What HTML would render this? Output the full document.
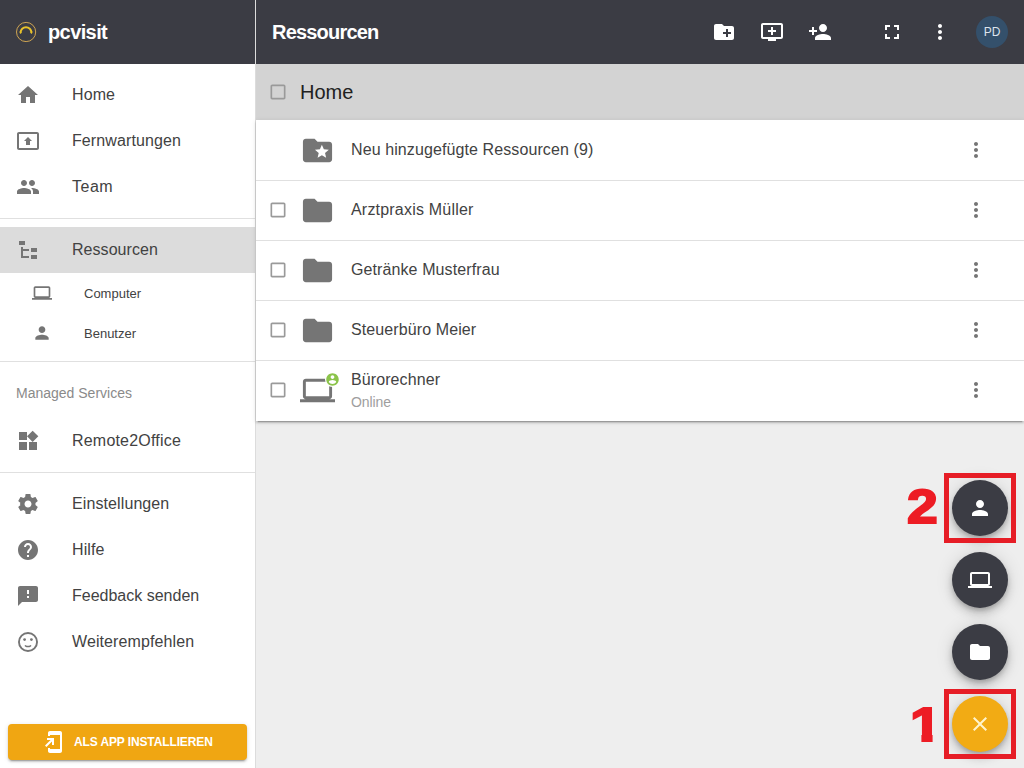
<!DOCTYPE html>
<html lang="de">
<head>
<meta charset="utf-8">
<title>pcvisit - Ressourcen</title>
<style>
*{box-sizing:border-box;margin:0;padding:0}
html,body{width:1024px;height:768px;overflow:hidden}
body{font-family:"Liberation Sans",sans-serif;background:#eeeeee;color:#424242;position:relative}
svg{display:block}
.abs{position:absolute}
/* sidebar */
#side{position:absolute;left:0;top:0;width:256px;height:768px;background:#fff;border-right:1px solid #dcdcdc}
#sidehead{position:absolute;left:0;top:0;width:255px;height:64px;background:#3b3c44}
#brand{position:absolute;left:48px;top:20px;font-size:20px;line-height:24px;font-weight:bold;color:#fff;letter-spacing:-0.6px}
.nav{position:absolute;left:0;width:255px;height:46px}
.nav svg{position:absolute;left:16px;top:11px;width:24px;height:24px;fill:#757575}
.nav span{position:absolute;left:72px;top:13px;font-size:16px;line-height:20px;color:#424242;white-space:nowrap;letter-spacing:0.1px}
.nav.sel{background:#dcdcdc}
.sub{position:absolute;left:0;width:255px;height:40px}
.sub svg{position:absolute;left:32px;top:10px;width:20px;height:20px;fill:#757575}
.sub span{position:absolute;left:84px;top:13px;font-size:13px;line-height:16px;color:#424242;white-space:nowrap}
.hr{position:absolute;left:0;width:255px;height:1px;background:#e0e0e0}
#ms{position:absolute;left:16px;top:385px;font-size:14px;line-height:16px;color:#8a8a8a;white-space:nowrap}
#inst{position:absolute;left:8px;top:724px;width:239px;height:36px;background:#f0a612;border-radius:4px;box-shadow:0 3px 1px -2px rgba(0,0,0,.2),0 2px 2px 0 rgba(0,0,0,.14),0 1px 5px 0 rgba(0,0,0,.12)}
#inst svg{position:absolute;left:34px;top:6px;width:24px;height:24px;fill:#fff}
#inst span{position:absolute;left:66px;top:10px;font-size:12px;line-height:16px;font-weight:bold;color:#fff;white-space:nowrap;letter-spacing:-0.12px}
/* main */
#top{position:absolute;left:256px;top:0;width:768px;height:64px;background:#3b3c44}
#title{position:absolute;left:16px;top:20px;font-size:20px;line-height:24px;font-weight:bold;color:#fff;letter-spacing:-0.8px}
#top svg{position:absolute;top:20px;width:24px;height:24px;fill:#fff}
#avatar{position:absolute;left:720px;top:16px;width:32px;height:32px;border-radius:50%;background:#34506b;color:#dde4ec;font-size:12px;line-height:32px;text-align:center}
#crumb{position:absolute;left:256px;top:64px;width:768px;height:56px;background:#d3d3d3}
#crumb span{position:absolute;left:44px;top:16px;font-size:20px;line-height:24px;color:#212121}
.cb{position:absolute;left:12px;width:20px;height:20px;fill:#9a9a9a}
#list{position:absolute;left:256px;top:120px;width:768px;height:301px;background:#fff;box-shadow:0 3px 1px -2px rgba(0,0,0,.2),0 2px 2px 0 rgba(0,0,0,.14),0 1px 5px 0 rgba(0,0,0,.12)}
.row{position:absolute;left:0;width:768px;height:60px;box-shadow:inset 0 1px 0 #e0e0e0}
.row:first-child{box-shadow:none}
.row .ic{position:absolute;left:44px;top:13px;width:35px;height:35px;fill:#757575}
.row .t{position:absolute;left:95px;top:20px;font-size:16px;line-height:20px;color:#424242;white-space:nowrap;letter-spacing:0.1px}
.row .mv{position:absolute;left:708px;top:18px;width:24px;height:24px;fill:#757575}
/* fabs */
.fab{position:absolute;left:952px;width:56px;height:56px;border-radius:50%;background:#3b3c44;box-shadow:0 3px 5px -1px rgba(0,0,0,.2),0 6px 10px 0 rgba(0,0,0,.14),0 1px 18px 0 rgba(0,0,0,.12)}
.fab svg{position:absolute;left:16px;top:16px;width:24px;height:24px;fill:#fff}
.mark{position:absolute;border:5px solid #e61d26}
.num{position:absolute;font-family:"Liberation Sans",sans-serif;font-weight:bold;color:#ed1c24;-webkit-text-stroke:2px #ed1c24;white-space:nowrap;transform-origin:0 0;transform:scaleX(1.17)}
</style>
</head>
<body>
<div id="side">
  <div id="sidehead">
    <svg class="abs" style="left:15px;top:21px" width="22" height="22" viewBox="0 0 22 22"><circle cx="11.100" cy="11" r="9.600" fill="none" stroke="#cfa552" stroke-width="1"/><path d="M5.6 11.6a5.4 5.4 0 0 1 10.8 0" fill="none" stroke="#e8c22a" stroke-width="1.9" stroke-linecap="round"/><path d="M4.3 10.6l2.600.2-1.300 2.200zM17.700 10.600l-2.600.2 1.300 2.200z" fill="#e8c22a"/></svg>
    <div id="brand">pcvisit</div>
  </div>
  <div class="nav" style="top:72px"><svg viewBox="0 0 24 24"><path d="M10 20v-6h4v6h5v-8h3L12 3 2 12h3v8z"/></svg><span>Home</span></div>
  <div class="nav" style="top:118px"><svg viewBox="0 0 24 24"><path d="M21 3H3c-1.110 0-2 .89-2 2v14c0 1.110.89 2 2 2h18c1.110 0 2-.89 2-2V5c0-1.110-.89-2-2-2zm0 16.020H3V4.980h18v14.040zM10 12H8l4-4 4 4h-2v4h-4v-4z"/></svg><span>Fernwartungen</span></div>
  <div class="nav" style="top:164px"><svg viewBox="0 0 24 24"><path d="M16 11c1.660 0 2.990-1.340 2.990-3S17.660 5 16 5c-1.660 0-3 1.340-3 3s1.340 3 3 3zm-8 0c1.660 0 2.990-1.340 2.990-3S9.660 5 8 5C6.340 5 5 6.340 5 8s1.340 3 3 3zm0 2c-2.330 0-7 1.170-7 3.500V19h14v-2.500c0-2.330-4.670-3.500-7-3.500zm8 0c-.29 0-.62.020-.97.050 1.160.84 1.970 1.970 1.970 3.450V19h6v-2.500c0-2.330-4.670-3.500-7-3.500z"/></svg><span style="letter-spacing:0.5px">Team</span></div>
  <div class="hr" style="top:218px"></div>
  <div class="nav sel" style="top:227px"><svg viewBox="0 0 24 24"><path d="M3 3h6v4H3V3m12 7h6v4h-6v-4m0 7h6v4h-6v-4m-2-4H7v5h6v2H5V9h2v2h6v2z"/></svg><span style="letter-spacing:0.05px">Ressourcen</span></div>
  <div class="sub" style="top:273px"><svg viewBox="0 0 24 24"><path d="M20 18c1.100 0 1.990-.9 1.990-2L22 6c0-1.100-.9-2-2-2H4c-1.100 0-2 .9-2 2v10c0 1.100.9 2 2 2H0v2h24v-2h-4zM4 6h16v10H4V6z"/></svg><span>Computer</span></div>
  <div class="sub" style="top:313px"><svg viewBox="0 0 24 24"><path d="M12 12c2.210 0 4-1.790 4-4s-1.790-4-4-4-4 1.790-4 4 1.790 4 4 4zm0 2c-2.670 0-8 1.340-8 4v2h16v-2c0-2.660-5.330-4-8-4z"/></svg><span>Benutzer</span></div>
  <div class="hr" style="top:361px"></div>
  <div id="ms">Managed Services</div>
  <div class="nav" style="top:418px"><svg viewBox="0 0 24 24"><path d="M13 13v8h8v-8h-8zM3 21h8v-8H3v8zM3 3v8h8V3H3zm13.660-1.310L11 7.340 16.660 13l5.660-5.660-5.660-5.650z"/></svg><span style="letter-spacing:0.2px">Remote2Office</span></div>
  <div class="hr" style="top:472px"></div>
  <div class="nav" style="top:481px"><svg viewBox="0 0 24 24"><path d="M19.430 12.980c.04-.32.070-.64.070-.98s-.03-.66-.07-.98l2.110-1.650c.19-.15.240-.42.120-.64l-2-3.460c-.12-.22-.39-.3-.61-.22l-2.490 1c-.52-.4-1.080-.73-1.690-.98l-.38-2.650C14.460 2.180 14.250 2 14 2h-4c-.25 0-.46.180-.49.420l-.38 2.650c-.61.250-1.170.59-1.690.98l-2.490-1c-.23-.09-.49 0-.61.220l-2 3.460c-.13.220-.07.490.12.640l2.110 1.650c-.4.320-.7.650-.7.980s.3.660.7.980l-2.110 1.650c-.19.150-.24.420-.12.640l2 3.460c.12.220.39.300.61.220l2.490-1c.52.400 1.080.73 1.690.98l.38 2.650c.3.240.24.420.49.420h4c.25 0 .46-.18.490-.42l.38-2.650c.61-.25 1.170-.59 1.690-.98l2.490 1c.23.090.49 0 .61-.22l2-3.460c.12-.22.070-.49-.12-.64l-2.110-1.650zM12 15.500c-1.930 0-3.500-1.570-3.500-3.500s1.570-3.500 3.500-3.500 3.500 1.570 3.500 3.500-1.570 3.500-3.500 3.500z"/></svg><span>Einstellungen</span></div>
  <div class="nav" style="top:527px"><svg viewBox="0 0 24 24"><path d="M12 2C6.480 2 2 6.480 2 12s4.480 10 10 10 10-4.480 10-10S17.520 2 12 2zm1 17h-2v-2h2v2zm2.070-7.750l-.9.920C13.450 12.900 13 13.500 13 15h-2v-.5c0-1.100.45-2.100 1.170-2.830l1.240-1.260c.37-.36.590-.86.590-1.410 0-1.100-.9-2-2-2s-2 .9-2 2H8c0-2.210 1.790-4 4-4s4 1.790 4 4c0 .88-.36 1.680-.93 2.250z"/></svg><span>Hilfe</span></div>
  <div class="nav" style="top:573px"><svg viewBox="0 0 24 24"><path d="M20 2H4c-1.100 0-1.990.9-1.990 2L2 22l4-4h14c1.100 0 2-.9 2-2V4c0-1.100-.9-2-2-2zm-7 12h-2v-2h2v2zm0-4h-2V6h2v4z"/></svg><span style="letter-spacing:0">Feedback senden</span></div>
  <div class="nav" style="top:619px"><svg viewBox="0 0 24 24"><circle cx="12" cy="12" r="9.050" fill="none" stroke="#757575" stroke-width="1.900"/><circle cx="8.600" cy="9.600" r="1.400"/><circle cx="15.400" cy="9.600" r="1.400"/><path d="M9.400 15.800q2.600 1.500 5.200 0" fill="none" stroke="#757575" stroke-width="1.500" stroke-linecap="round"/></svg><span>Weiterempfehlen</span></div>
  <div id="inst"><svg viewBox="0 0 24 24"><path d="M18 1.010L8 1c-1.100 0-2 .9-2 2v3h2V5h10v14H8v-1H6v3c0 1.100.9 2 2 2h10c1.100 0 2-.9 2-2V3c0-1.100-.9-1.990-2-1.990zM10 15h2V8H5v2h3.590L3 15.590 4.410 17 10 11.410V15z"/></svg><span>ALS APP INSTALLIEREN</span></div>
</div>

<div id="top">
  <div id="title">Ressourcen</div>
  <svg style="left:456px" viewBox="0 0 24 24"><path d="M20 6h-8l-2-2H4c-1.110 0-1.990.89-1.990 2L2 18c0 1.110.89 2 2 2h16c1.110 0 2-.89 2-2V8c0-1.110-.89-2-2-2zm-1 8h-3v3h-2v-3h-3v-2h3V9h2v3h3v2z"/></svg>
  <svg style="left:504px" viewBox="0 0 24 24"><path d="M21 3H3c-1.110 0-2 .89-2 2v12c0 1.100.89 2 2 2h5v2h8v-2h5c1.100 0 1.990-.9 1.990-2L23 5c0-1.110-.9-2-2-2zm0 14H3V5h18v12zm-5-7v2h-3v3h-2v-3H8v-2h3V7h2v3h3z"/></svg>
  <svg style="left:552px" viewBox="0 0 24 24"><path d="M15 12c2.210 0 4-1.790 4-4s-1.790-4-4-4-4 1.790-4 4 1.790 4 4 4zm-9-2V7H4v3H1v2h3v3h2v-3h3v-2H6zm9 4c-2.670 0-8 1.340-8 4v2h16v-2c0-2.660-5.330-4-8-4z"/></svg>
  <svg style="left:624px" viewBox="0 0 24 24"><path d="M7 14H5v5h5v-2H7v-3zm-2-4h2V7h3V5H5v5zm12 7h-3v2h5v-5h-2v3zM14 5v2h3v3h2V5h-5z"/></svg>
  <svg style="left:672px" viewBox="0 0 24 24"><path d="M12 8c1.100 0 2-.9 2-2s-.9-2-2-2-2 .9-2 2 .9 2 2 2zm0 2c-1.100 0-2 .9-2 2s.9 2 2 2 2-.9 2-2-.9-2-2-2zm0 6c-1.100 0-2 .9-2 2s.9 2 2 2 2-.9 2-2-.9-2-2-2z"/></svg>
  <div id="avatar">PD</div>
</div>

<div id="crumb">
  <svg class="cb" style="top:18px" viewBox="0 0 24 24"><path d="M19 5v14H5V5h14m0-2H5c-1.100 0-2 .9-2 2v14c0 1.100.9 2 2 2h14c1.100 0 2-.9 2-2V5c0-1.100-.9-2-2-2z"/></svg>
  <span>Home</span>
</div>

<div id="list">
  <div class="row" style="top:0">
    <svg class="ic" viewBox="0 0 24 24"><path d="M20 6h-8l-2-2H4c-1.100 0-1.990.9-1.990 2L2 18c0 1.100.9 2 2 2h16c1.100 0 2-.9 2-2V8c0-1.100-.9-2-2-2zm-2.060 11L15 15.280 12.060 17l.78-3.330-2.590-2.240 3.410-.29L15 8l1.340 3.140 3.410.29-2.590 2.240.78 3.330z"/></svg>
    <div class="t">Neu hinzugefügte Ressourcen (9)</div>
    <svg class="mv" viewBox="0 0 24 24"><path d="M12 8c1.100 0 2-.9 2-2s-.9-2-2-2-2 .9-2 2 .9 2 2 2zm0 2c-1.100 0-2 .9-2 2s.9 2 2 2 2-.9 2-2-.9-2-2-2zm0 6c-1.100 0-2 .9-2 2s.9 2 2 2 2-.9 2-2-.9-2-2-2z"/></svg>
  </div>
  <div class="row" style="top:60px">
    <svg class="cb" style="top:20px" viewBox="0 0 24 24"><path d="M19 5v14H5V5h14m0-2H5c-1.100 0-2 .9-2 2v14c0 1.100.9 2 2 2h14c1.100 0 2-.9 2-2V5c0-1.100-.9-2-2-2z"/></svg>
    <svg class="ic" viewBox="0 0 24 24"><path d="M10 4H4c-1.100 0-1.990.9-1.990 2L2 18c0 1.100.9 2 2 2h16c1.100 0 2-.9 2-2V8c0-1.100-.9-2-2-2h-8l-2-2z"/></svg>
    <div class="t" style="letter-spacing:0.2px">Arztpraxis Müller</div>
    <svg class="mv" viewBox="0 0 24 24"><path d="M12 8c1.100 0 2-.9 2-2s-.9-2-2-2-2 .9-2 2 .9 2 2 2zm0 2c-1.100 0-2 .9-2 2s.9 2 2 2 2-.9 2-2-.9-2-2-2zm0 6c-1.100 0-2 .9-2 2s.9 2 2 2 2-.9 2-2-.9-2-2-2z"/></svg>
  </div>
  <div class="row" style="top:120px">
    <svg class="cb" style="top:20px" viewBox="0 0 24 24"><path d="M19 5v14H5V5h14m0-2H5c-1.100 0-2 .9-2 2v14c0 1.100.9 2 2 2h14c1.100 0 2-.9 2-2V5c0-1.100-.9-2-2-2z"/></svg>
    <svg class="ic" viewBox="0 0 24 24"><path d="M10 4H4c-1.100 0-1.990.9-1.990 2L2 18c0 1.100.9 2 2 2h16c1.100 0 2-.9 2-2V8c0-1.100-.9-2-2-2h-8l-2-2z"/></svg>
    <div class="t">Getränke Musterfrau</div>
    <svg class="mv" viewBox="0 0 24 24"><path d="M12 8c1.100 0 2-.9 2-2s-.9-2-2-2-2 .9-2 2 .9 2 2 2zm0 2c-1.100 0-2 .9-2 2s.9 2 2 2 2-.9 2-2-.9-2-2-2zm0 6c-1.100 0-2 .9-2 2s.9 2 2 2 2-.9 2-2-.9-2-2-2z"/></svg>
  </div>
  <div class="row" style="top:180px">
    <svg class="cb" style="top:20px" viewBox="0 0 24 24"><path d="M19 5v14H5V5h14m0-2H5c-1.100 0-2 .9-2 2v14c0 1.100.9 2 2 2h14c1.100 0 2-.9 2-2V5c0-1.100-.9-2-2-2z"/></svg>
    <svg class="ic" viewBox="0 0 24 24"><path d="M10 4H4c-1.100 0-1.990.9-1.990 2L2 18c0 1.100.9 2 2 2h16c1.100 0 2-.9 2-2V8c0-1.100-.9-2-2-2h-8l-2-2z"/></svg>
    <div class="t">Steuerbüro Meier</div>
    <svg class="mv" viewBox="0 0 24 24"><path d="M12 8c1.100 0 2-.9 2-2s-.9-2-2-2-2 .9-2 2 .9 2 2 2zm0 2c-1.100 0-2 .9-2 2s.9 2 2 2 2-.9 2-2-.9-2-2-2zm0 6c-1.100 0-2 .9-2 2s.9 2 2 2 2-.9 2-2-.9-2-2-2z"/></svg>
  </div>
  <div class="row" style="top:240px">
    <svg class="cb" style="top:20px" viewBox="0 0 24 24"><path d="M19 5v14H5V5h14m0-2H5c-1.100 0-2 .9-2 2v14c0 1.100.9 2 2 2h14c1.100 0 2-.9 2-2V5c0-1.100-.9-2-2-2z"/></svg>
    <svg class="ic" viewBox="0 0 24 24"><path d="M20 18c1.100 0 1.990-.9 1.990-2L22 6c0-1.100-.9-2-2-2H4c-1.100 0-2 .9-2 2v10c0 1.100.9 2 2 2H0v2h24v-2h-4zM4 6h16v10H4V6z"/></svg>
    <svg class="abs" style="left:69.100px;top:11.500px" width="15" height="15" viewBox="0 0 24 24"><circle cx="12" cy="12" r="12" fill="#fff"/><path fill="#8bc34a" d="M12 2C6.480 2 2 6.480 2 12s4.480 10 10 10 10-4.480 10-10S17.520 2 12 2zm0 3c1.660 0 3 1.340 3 3s-1.340 3-3 3-3-1.340-3-3 1.340-3 3-3zm0 14.200c-2.500 0-4.710-1.280-6-3.220.03-1.990 4-3.080 6-3.080 1.990 0 5.970 1.090 6 3.080-1.290 1.940-3.500 3.220-6 3.220z"/></svg>
    <div class="t" style="top:10px">Bürorechner</div>
    <div class="t" style="top:34px;font-size:14px;line-height:16px;color:#9e9e9e;letter-spacing:-0.1px">Online</div>
    <svg class="mv" viewBox="0 0 24 24"><path d="M12 8c1.100 0 2-.9 2-2s-.9-2-2-2-2 .9-2 2 .9 2 2 2zm0 2c-1.100 0-2 .9-2 2s.9 2 2 2 2-.9 2-2-.9-2-2-2zm0 6c-1.100 0-2 .9-2 2s.9 2 2 2 2-.9 2-2-.9-2-2-2z"/></svg>
  </div>
</div>

<div class="fab" style="top:480px"><svg viewBox="0 0 24 24"><path d="M12 12c2.210 0 4-1.790 4-4s-1.790-4-4-4-4 1.790-4 4 1.790 4 4 4zm0 2c-2.670 0-8 1.340-8 4v2h16v-2c0-2.660-5.330-4-8-4z"/></svg></div>
<div class="fab" style="top:552px"><svg viewBox="0 0 24 24"><path d="M20 18c1.100 0 1.990-.9 1.990-2L22 6c0-1.100-.9-2-2-2H4c-1.100 0-2 .9-2 2v10c0 1.100.9 2 2 2H0v2h24v-2h-4zM4 6h16v10H4V6z"/></svg></div>
<div class="fab" style="top:624px"><svg viewBox="0 0 24 24"><path d="M10 4H4c-1.100 0-1.990.9-1.990 2L2 18c0 1.100.9 2 2 2h16c1.100 0 2-.9 2-2V8c0-1.100-.9-2-2-2h-8l-2-2z"/></svg></div>
<div class="fab" style="top:696px;background:#f2ab14"><svg viewBox="0 0 24 24" style="fill:#fff4cc"><path d="M19 6.410L17.590 5 12 10.590 6.410 5 5 6.410 10.590 12 5 17.590 6.410 19 12 13.410 17.590 19 19 17.590 13.410 12z"/></svg></div>

<div class="mark" style="left:944px;top:473px;width:72px;height:70px"></div>
<div class="mark" style="left:944px;top:689px;width:72px;height:70px"></div>
<div class="num" style="left:906.500px;top:479px;font-size:48px;line-height:56px;transform:scaleX(1.15)">2</div>
<div class="abs" style="left:900px;top:690px;width:48px;height:66px;clip-path:polygon(0 0,48px 0,48px 44px,32.600px 44px,32.600px 66px,21.400px 66px,21.400px 44px,0 44px)"><div class="num" style="left:10px;top:7px;font-size:48px;line-height:56px">1</div></div>
</body>
</html>
